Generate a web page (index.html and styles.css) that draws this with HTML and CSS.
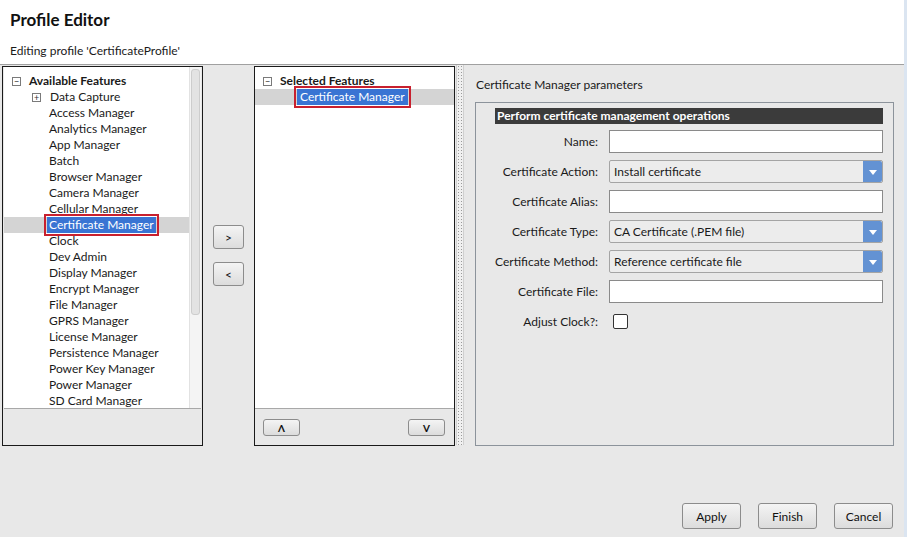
FILE: index.html
```html
<!DOCTYPE html>
<html lang="en">
<head>
	<meta charset="UTF-8">
	<title>Profile Editor</title>
	<link rel="stylesheet" href="styles.css">
</head>
<body>
	<div class="window">
		<div class="header">
			<h1 class="page-name">Profile Editor</h1>
			<p class="subtitle">Editing profile 'CertificateProfile'</p>
		</div>

		<div class="main">
			<div class="panel available">
				<div class="list-wrap">
					<div class="tree">
						<div class="tree-root">
							<span class="toggle">&minus;</span>Available Features
						</div>
						<div class="tree-item branch"><span class="toggle">+</span>Data Capture</div>
						<div class="tree-item">Access Manager</div>
						<div class="tree-item">Analytics Manager</div>
						<div class="tree-item">App Manager</div>
						<div class="tree-item">Batch</div>
						<div class="tree-item">Browser Manager</div>
						<div class="tree-item">Camera Manager</div>
						<div class="tree-item">Cellular Manager</div>
						<div class="tree-item selected"><span class="sel">Certificate Manager</span></div>
						<div class="tree-item">Clock</div>
						<div class="tree-item">Dev Admin</div>
						<div class="tree-item">Display Manager</div>
						<div class="tree-item">Encrypt Manager</div>
						<div class="tree-item">File Manager</div>
						<div class="tree-item">GPRS Manager</div>
						<div class="tree-item">License Manager</div>
						<div class="tree-item">Persistence Manager</div>
						<div class="tree-item">Power Key Manager</div>
						<div class="tree-item">Power Manager</div>
						<div class="tree-item">SD Card Manager</div>
					</div>
					<div class="scrollbar"><div class="thumb"></div></div>
				</div>
				<div class="panel-footer"></div>
			</div>

			<div class="movers">
				<button class="btn small">&gt;</button>
				<button class="btn small">&lt;</button>
			</div>

			<div class="panel chosen">
				<div class="list-wrap">
					<div class="tree">
						<div class="tree-root">
							<span class="toggle">&minus;</span>Selected Features
						</div>
						<div class="tree-item selected"><span class="sel">Certificate Manager</span></div>
					</div>
				</div>
				<div class="panel-footer order">
					<button class="btn tiny">&#923;</button>
					<button class="btn tiny">V</button>
				</div>
			</div>

			<div class="splitter"></div>

			<div class="params">
				<p class="params-title">Certificate Manager parameters</p>
				<div class="group-box">
					<div class="group-head">Perform certificate management operations</div>
					<div class="form">
						<label>Name:</label>
						<div class="field"></div>

						<label>Certificate Action:</label>
						<div class="select">Install certificate<span class="arrow"></span></div>

						<label>Certificate Alias:</label>
						<div class="field"></div>

						<label>Certificate Type:</label>
						<div class="select">CA Certificate (.PEM file)<span class="arrow"></span></div>

						<label>Certificate Method:</label>
						<div class="select">Reference certificate file<span class="arrow"></span></div>

						<label>Certificate File:</label>
						<div class="field"></div>

						<label>Adjust Clock?:</label>
						<div class="check-cell"><span class="checkbox"></span></div>
					</div>
				</div>
			</div>
		</div>

		<div class="actions">
			<button class="btn action">Apply</button>
			<button class="btn action">Finish</button>
			<button class="btn action">Cancel</button>
		</div>
	</div>
</body>
</html>
```

FILE: styles.css
```css
body {
	margin: 0;
	font-family: Lato, "Open Sans", sans-serif;
	font-size: 12px;
	color: #1a1a1a;
	background-color: #e8e8e8;
}

.window {
	width: 904px;
	height: 537px;
	border-right: 3px solid #dbe5f1;
	display: flex;
	flex-direction: column;
	overflow: hidden;
}

.header {
	background-color: #fff;
	height: 65px;
	border-bottom: 1px solid #a0a0a0;
	padding-left: 10px;
	box-sizing: border-box;
}

.page-name {
	font-size: 17px;
	font-weight: bold;
	margin: 0;
	padding-top: 9px;
	color: #111;
}

.subtitle {
	margin: 13px 0 0;
	font-size: 12px;
}

.main {
	display: flex;
	padding: 1px 0 0 2px;
	height: 380px;
}

.panel {
	width: 201px;
	height: 380px;
	box-sizing: border-box;
	border: 1px solid #1a1a1a;
	display: flex;
	flex-direction: column;
	background-color: #e8e8e8;
}

.list-wrap {
	height: 341px;
	display: flex;
	background-color: #fff;
	border-bottom: 1px solid #a8a8a8;
	overflow: hidden;
	margin: 0 1px;
}

.chosen .list-wrap {
	margin: 0;
}

.tree {
	flex: 1;
	padding-top: 6px;
	overflow: hidden;
}

.tree-root {
	height: 16px;
	line-height: 16px;
	font-weight: bold;
	padding-left: 8px;
	display: flex;
	align-items: center;
}

.toggle {
	width: 7px;
	height: 7px;
	border: 1px solid #7a7a7a;
	font-size: 9px;
	line-height: 7px;
	text-align: center;
	font-weight: normal;
	margin-right: 8px;
	color: #333;
}

.tree-item {
	height: 16px;
	line-height: 16px;
	padding-left: 45px;
	white-space: nowrap;
}

.tree-item.branch {
	padding-left: 28px;
	display: flex;
	align-items: center;
}

.tree-item.branch .toggle {
	margin-right: 9px;
}

.tree-item.selected {
	background-color: #d4d4d4;
}

.sel {
	display: inline-block;
	line-height: 16px;
	padding: 0 2px;
	background-color: #3974d3;
	color: #fff;
	outline: 2px solid #c8202e;
	outline-offset: 1px;
	margin-left: -2px;
}

.chosen .tree-item {
	padding-left: 44px;
}

.chosen .sel {
	padding: 0 3px;
}

.scrollbar {
	width: 12px;
	background-color: #f4f4f4;
	border-left: 1px solid #e2e2e2;
	padding: 2px 1px 0;
	box-sizing: border-box;
}

.thumb {
	height: 244px;
	background-color: #e3e3e3;
	border: 1px solid #cdcdcd;
	border-radius: 3px;
}

.panel-footer {
	flex: 1;
}

.order {
	display: flex;
	justify-content: space-between;
	padding: 10px 9px 0 8px;
}

.movers {
	width: 51px;
	display: flex;
	flex-direction: column;
	padding: 159px 0 0 10px;
	box-sizing: border-box;
	gap: 13px;
}

.btn {
	font-family: inherit;
	font-size: 12px;
	color: #111;
	background: linear-gradient(#f4f4f4, #dcdcdc);
	border: 1px solid #8c8c8c;
	border-radius: 3px;
	padding: 0;
	cursor: pointer;
}

.small {
	width: 31px;
	height: 24px;
}

.tiny {
	width: 37px;
	height: 17px;
	font-size: 10px;
	font-weight: bold;
}

.splitter {
	width: 6px;
	margin: -1px 1px 0 1px;
	height: 380px;
	background-image: radial-gradient(#9a9a9a 0.6px, transparent 0.9px);
	background-size: 3px 3px;
	background-color: #f0f0f0;
	border-left: 1px solid #d0d0d0;
	border-right: 1px solid #d0d0d0;
}

.params {
	flex: 1;
	padding: 0 10px 0 10px;
}

.params-title {
	margin: 11px 0 0 1px;
	height: 25px;
}

.group-box {
	height: 344px;
	border: 1px solid #8c939b;
	box-sizing: border-box;
	padding: 5px 10px 0 19px;
}

.group-head {
	background-color: #3b3b3b;
	color: #fff;
	font-weight: bold;
	height: 16px;
	line-height: 16px;
	padding-left: 2px;
}

.form {
	display: grid;
	grid-template-columns: 103px 1fr;
	column-gap: 11px;
	row-gap: 7px;
	grid-auto-rows: 23px;
	margin-top: 6px;
}

.form label {
	text-align: right;
	line-height: 23px;
}

.field {
	background-color: #fff;
	border: 1px solid #8a8a8a;
}

.select {
	position: relative;
	background-color: #ececec;
	border: 1px solid #a4a4a4;
	border-radius: 2px;
	line-height: 21px;
	padding-left: 4px;
}

.arrow {
	position: absolute;
	right: 0;
	top: 0;
	width: 19px;
	height: 21px;
	background-color: #6392d3;
	border-radius: 0 2px 2px 0;
}

.arrow::after {
	content: "";
	position: absolute;
	left: 6px;
	top: 9px;
	border-left: 4px solid transparent;
	border-right: 4px solid transparent;
	border-top: 5px solid #fff;
}

.check-cell {
	padding: 4px 0 0 4px;
}

.checkbox {
	display: block;
	width: 13px;
	height: 13px;
	background-color: #fff;
	border: 1px solid #333;
	border-radius: 2px;
}

.actions {
	display: flex;
	justify-content: flex-end;
	gap: 17px;
	padding: 57px 11px 0 0;
}

.action {
	width: 59px;
	height: 26px;
}
```
